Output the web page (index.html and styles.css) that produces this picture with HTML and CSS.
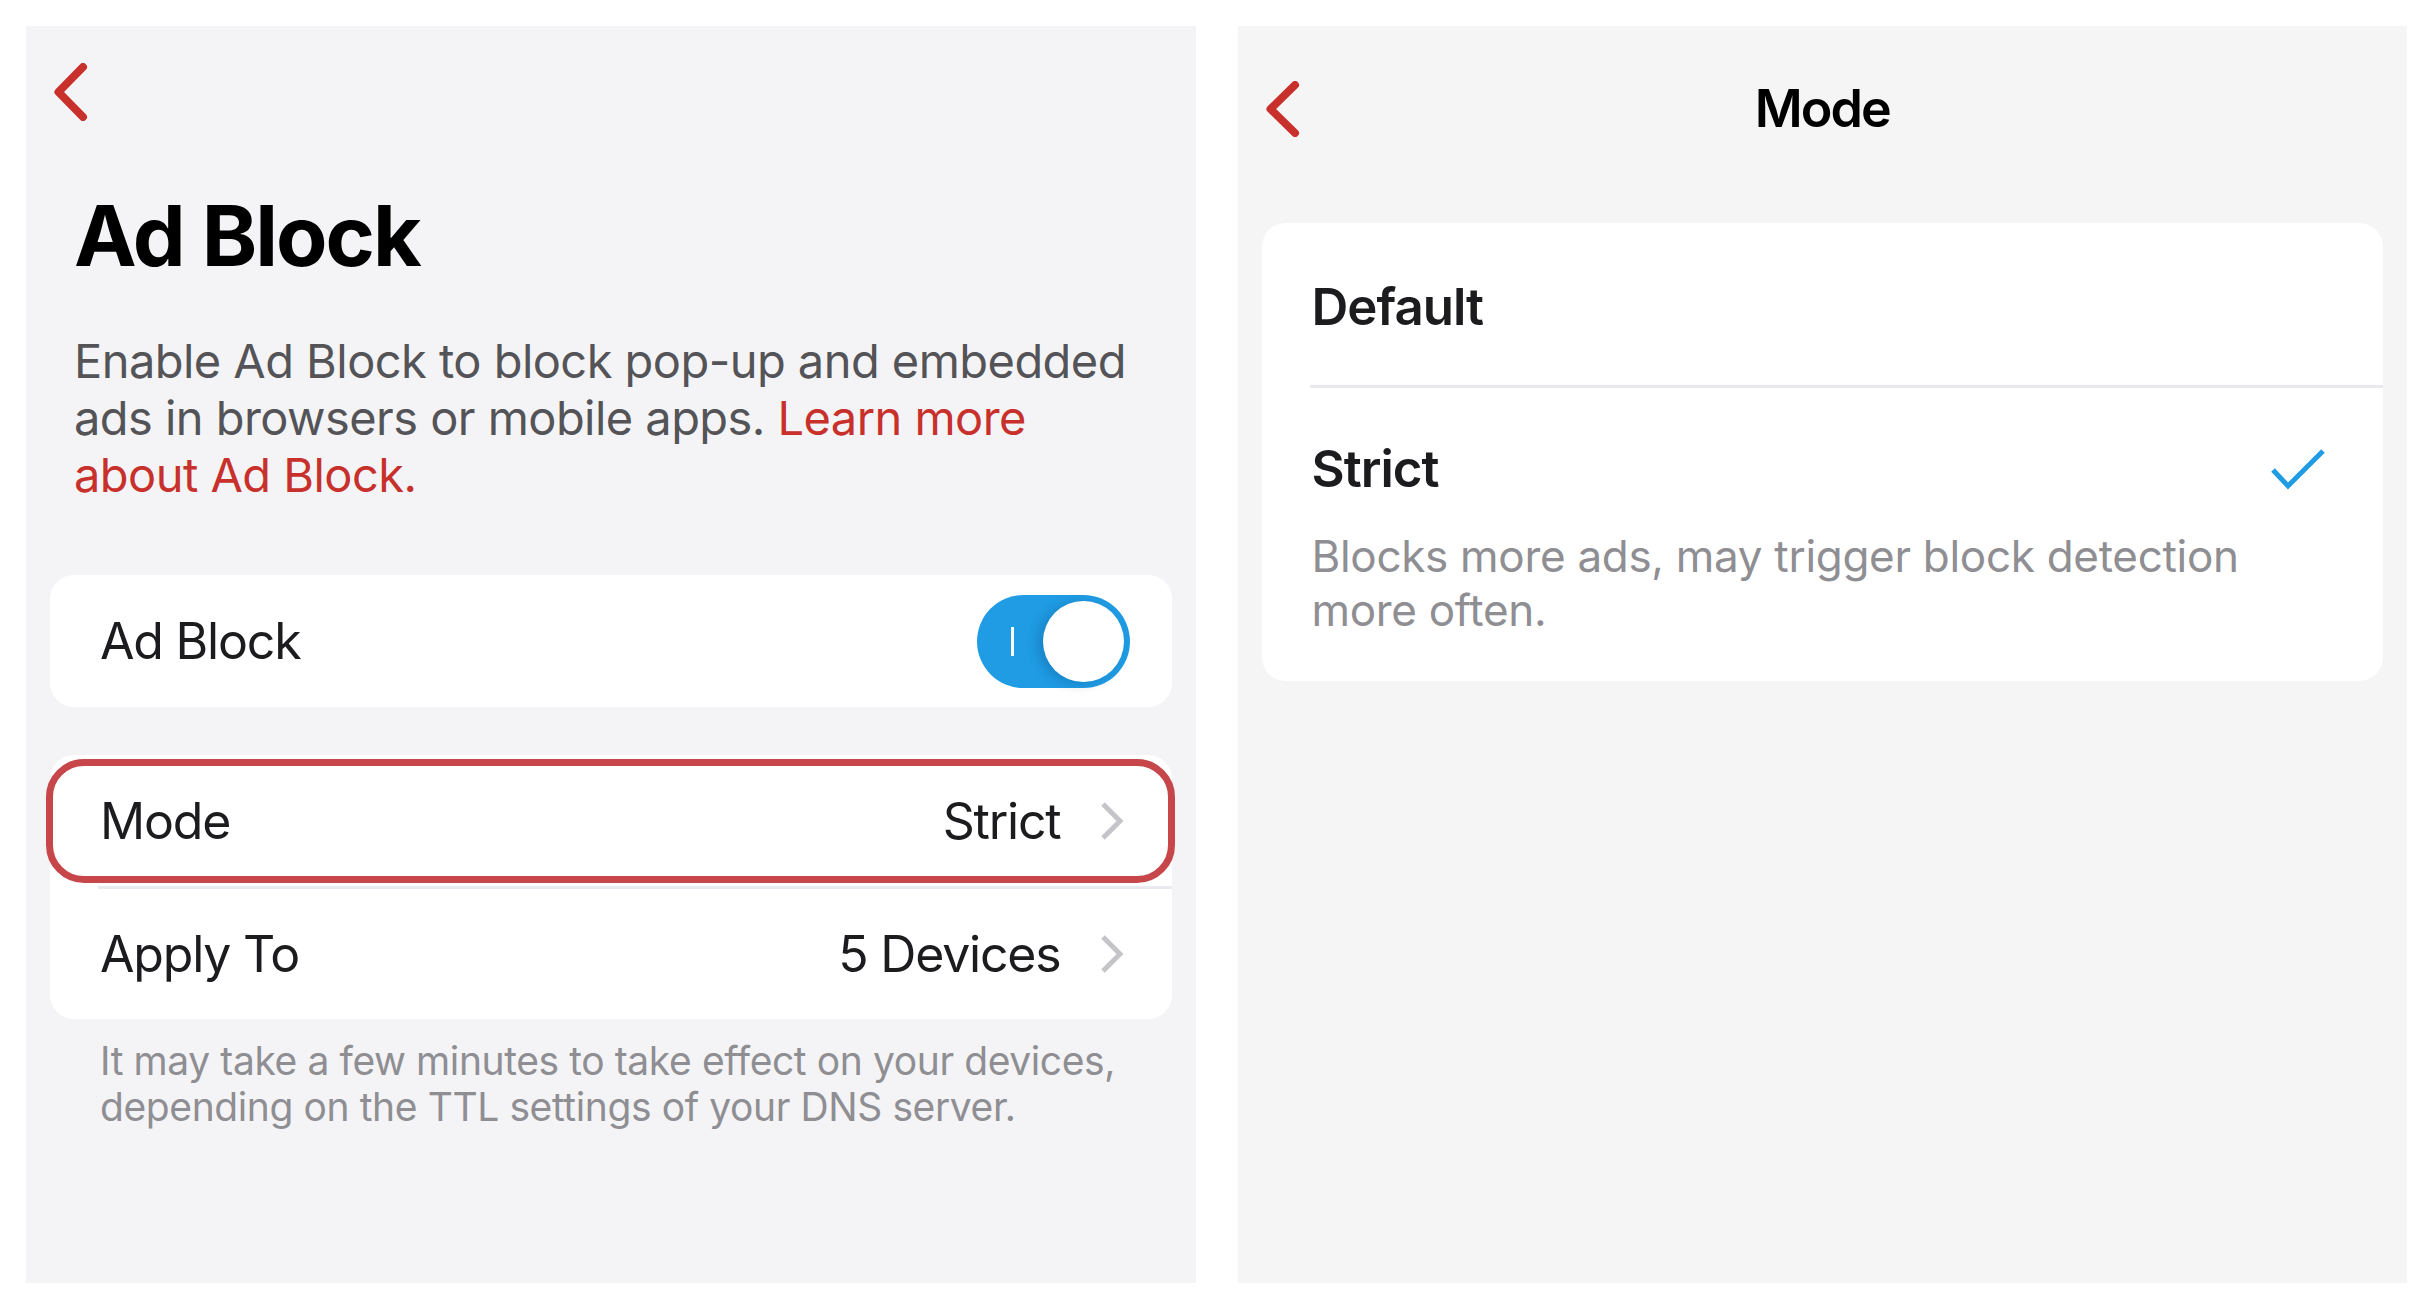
FILE: index.html
```html
<!DOCTYPE html>
<html lang="en">
<head>
  <meta charset="UTF-8" />
  <meta name="viewport" content="width=device-width, initial-scale=1.0"/>
  <title>Ad Block</title>
  <link rel="stylesheet" href="styles.css">
</head>
<body>
  <div class="screens">

    <!-- Ad Block settings -->
    <section class="screen screen-adblock">
      <button class="back-btn" aria-label="Back">
        <svg viewBox="0 0 34 58" width="34" height="58"><path d="M29 4 L4.5 29 L29 54"/></svg>
      </button>

      <h1 class="page-title">Ad Block</h1>
      <p class="intro">Enable Ad Block to block pop-up and embedded ads in browsers or mobile apps. <a href="#">Learn more about Ad Block.</a></p>

      <div class="group">
        <div class="row row-toggle">
          <span class="row-label">Ad Block</span>
          <label class="switch">
            <input type="checkbox" checked>
            <span class="track"><span class="on-mark"></span><span class="knob"></span></span>
          </label>
        </div>
      </div>

      <div class="group">
        <div class="row row-link is-marked">
          <span class="row-label">Mode</span>
          <span class="row-value">Strict
            <svg class="chevron" viewBox="0 0 24 40" width="24" height="40"><path d="M3 3 L20 20 L3 37"/></svg>
          </span>
        </div>
        <div class="divider"></div>
        <div class="row row-link">
          <span class="row-label">Apply To</span>
          <span class="row-value">5 Devices
            <svg class="chevron" viewBox="0 0 24 40" width="24" height="40"><path d="M3 3 L20 20 L3 37"/></svg>
          </span>
        </div>
      </div>

      <p class="footnote">It may take a few minutes to take effect on your devices, depending on the TTL settings of your DNS server.</p>
    </section>

    <!-- Mode picker -->
    <section class="screen screen-mode">
      <header class="nav-bar">
        <button class="back-btn" aria-label="Back">
          <svg viewBox="0 0 34 56" width="34" height="56"><path d="M29 4 L4.5 28 L29 52"/></svg>
        </button>
        <h2 class="nav-title">Mode</h2>
        <span></span>
      </header>

      <div class="group">
        <div class="option">
          <div class="option-head"><span class="option-name">Default</span></div>
        </div>
        <div class="divider"></div>
        <div class="option option-strict">
          <div class="option-head">
            <span class="option-name">Strict</span>
            <svg class="check" viewBox="0 0 56 42" width="56" height="42"><path d="M3 22 L18 38 L53 3"/></svg>
          </div>
          <p class="option-desc">Blocks more ads, may trigger block detection more often.</p>
        </div>
      </div>
    </section>

  </div>
</body>
</html>
```

FILE: styles.css
```css
body {
  margin: 0;
  background: #fff;
  font-family: Inter, "Noto Sans", sans-serif;
  color: #1c1c1e;
}

.screens {
  display: flex;
  gap: 42px;
  padding: 26px;
  height: 1309px;
  box-sizing: border-box;
}

.screen {
  flex: 1;
  padding: 0 24px;
  background: #f4f4f6;
}

.screen-mode {
  background: #f5f5f5;
}

.back-btn {
  display: block;
  margin: 37px 0 0 4px;
  padding: 0;
  border: none;
  background: none;
  line-height: 0;
  cursor: pointer;
}

.back-btn path {
  fill: none;
  stroke: #c8302c;
  stroke-width: 8;
  stroke-linecap: round;
  stroke-linejoin: round;
}

.page-title {
  margin: 65px 0 0 24px;
  font-size: 84px;
  line-height: 100px;
  font-weight: 700;
  color: #000;
  letter-spacing: -2px;
}

.intro {
  margin: 46px 24px 0 24px;
  font-size: 47px;
  line-height: 57px;
  color: #545458;
  letter-spacing: -0.55px;
}

.intro a {
  color: #c8302c;
  text-decoration: none;
}

.group {
  margin-top: 72px;
  background: #fff;
  border-radius: 24px;
}

.group + .group {
  margin-top: 48px;
}

.row {
  display: flex;
  align-items: center;
  justify-content: space-between;
  height: 131px;
  padding: 0 48px 0 50px;
  font-size: 50px;
  letter-spacing: -1.2px;
  position: relative;
}

.row-toggle {
  height: 132px;
  padding-right: 42px;
}

.row-link:last-child {
  height: 130px;
}

.row-value {
  display: flex;
  align-items: center;
  gap: 39px;
}

.chevron path {
  fill: none;
  stroke: #c5c5c9;
  stroke-width: 5;
}

/* red outline drawn around the selected row */
.is-marked::after {
  content: "";
  position: absolute;
  top: 4px;
  bottom: 3px;
  left: -4px;
  right: -3px;
  border: 7px solid #c6464a;
  border-radius: 38px;
  pointer-events: none;
}

.divider {
  height: 3px;
  margin-left: 48px;
  background: #e8eaf0;
}

.switch input {
  display: none;
}

.track {
  display: block;
  position: relative;
  width: 153px;
  height: 93px;
  border-radius: 47px;
  background: #1f9ce4;
}

.on-mark {
  position: absolute;
  left: 34px;
  top: 32px;
  width: 3px;
  height: 29px;
  background: #fff;
}

.knob {
  position: absolute;
  right: 6px;
  top: 6px;
  width: 81px;
  height: 81px;
  border-radius: 50%;
  background: #fff;
  box-shadow: -5px 2px 12px rgba(0, 40, 90, 0.22);
}

.footnote {
  margin: 19px 0 0;
  padding: 0 0 0 50px;
  font-size: 39px;
  line-height: 46px;
  color: #8e8e93;
  letter-spacing: -0.4px;
}

/* mode picker */
.nav-bar {
  display: grid;
  grid-template-columns: 1fr auto 1fr;
  align-items: center;
  margin-top: 55px;
  height: 56px;
}

.nav-bar .back-btn {
  justify-self: start;
  margin-top: 0;
}

.nav-title {
  margin: 0;
  font-size: 52px;
  line-height: 56px;
  font-weight: 600;
  color: #000;
  letter-spacing: -2px;
}

.screen-mode .group {
  margin-top: 86px;
}

.option {
  padding: 54px 57px 48px 50px;
}

.option-strict {
  padding-top: 51px;
  padding-bottom: 44px;
}

.option-head {
  display: flex;
  align-items: center;
  justify-content: space-between;
  height: 60px;
}

.option-name {
  font-size: 51px;
  line-height: 60px;
  font-weight: 600;
  letter-spacing: -1px;
}

.check path {
  fill: none;
  stroke: #1f9ce4;
  stroke-width: 5;
}

.option-desc {
  margin: 30px 0 0;
  font-size: 44px;
  line-height: 54px;
  color: #8e8e93;
  letter-spacing: -0.3px;
}
```
